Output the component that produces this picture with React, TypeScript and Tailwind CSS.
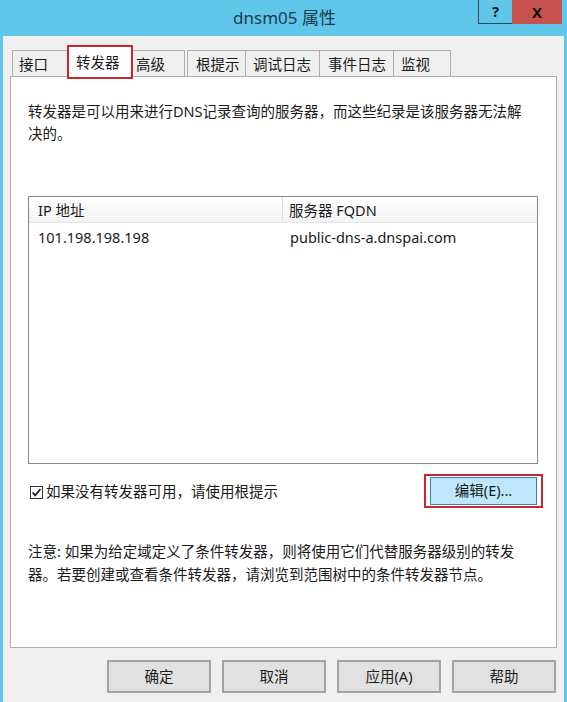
import React from "react";

const font = { fontFamily: '"Noto Sans", "Noto Sans CJK SC", sans-serif' };

function Tab({ label, w, pl = "pl-[6px]" }: { label: string; w: string; pl?: string }) {
  return (
    <div
      className={`${w} ${pl} h-[26px] -ml-px border border-b-0 border-[#adadad] bg-[#f0f0f0] text-[14.5px] leading-[26px] text-[#1a1a1a] whitespace-nowrap`}
    >
      {label}
    </div>
  );
}

function Btn({ label }: { label: string }) {
  return (
    <div className="w-[104px] h-[33px] border-2 border-[#a3a3a3] bg-[#e1e1e1] flex items-center justify-center text-[14.5px] text-[#1a1a1a]">
      {label}
    </div>
  );
}

export default function App() {
  return (
    <div style={font} className="w-[567px] h-[702px] bg-[#f0f0f0] flex flex-col overflow-hidden">
      {/* title bar */}
      <div className="relative h-[36px] bg-[#60c6ea] flex items-center justify-center shrink-0">
        <span className="text-[17px] text-[#1c3a4e] pl-[2px]">dnsm05 属性</span>
        <div className="absolute top-0 right-[5px] flex">
          <div className="w-[34px] h-[24px] border-l border-b border-[#2b4a5c] flex items-center justify-center text-[14px] font-bold text-[#111]">
            ?
          </div>
          <div className="w-[50px] h-[24px] bg-[#c7514c] flex items-center justify-center text-[15px] font-bold text-[#111]">
            X
          </div>
        </div>
      </div>

      {/* body */}
      <div className="flex-1 flex flex-col border-x-[3px] border-[#60c6ea] pl-[7px]">
        {/* tabs */}
        <div className="flex items-end h-[40px] pl-[3px] relative z-10">
          <Tab label="接口" w="w-[56px]" />
          <div className="w-[66px] h-[34px] -ml-px -mb-[3px] border-2 border-[#c8272d] bg-white pl-[7px] pt-[5px] text-[14.5px] leading-[20px] text-[#1a1a1a] whitespace-nowrap relative z-10">
            转发器
          </div>
          <Tab label="高级" w="w-[53px]" pl="pl-[3px]" />
          <div className="w-[3px]" />
          <Tab label="根提示" w="w-[59px]" pl="pl-[8px]" />
          <Tab label="调试日志" w="w-[75px]" pl="pl-[7px]" />
          <Tab label="事件日志" w="w-[75px]" pl="pl-[8px]" />
          <Tab label="监视" w="w-[58px]" pl="pl-[7px]" />
        </div>

        {/* tab page */}
        <div className="w-[547px] h-[572px] border border-[#adadad] bg-white pl-[17px] pt-[23px] text-[14.5px] text-[#1a1a1a] flex flex-col">
          <div className="leading-[22px] whitespace-nowrap">
            <div>转发器是可以用来进行DNS记录查询的服务器，而这些纪录是该服务器无法解</div>
            <div>决的。</div>
          </div>

          {/* list */}
          <div className="mt-[52px] w-[510px] h-[268px] border border-[#828790] bg-white flex flex-col">
            <div className="h-[26px] flex bg-gradient-to-b from-white to-[#f3f3f3] border-b border-[#e5e5e5]">
              <div className="w-[254px] border-r border-[#e0e0e0] pl-[9px] leading-[26px]">IP 地址</div>
              <div className="pl-[6px] leading-[26px]">服务器 FQDN</div>
            </div>
            <div className="h-[26px] flex items-center mt-[2px]">
              <div className="w-[254px] pl-[9px]">101.198.198.198</div>
              <div className="pl-[7px]">public-dns-a.dnspai.com</div>
            </div>
          </div>

          {/* checkbox row */}
          <div className="mt-[10px] w-[515px] flex items-center justify-between">
            <div className="flex items-center pl-[2px] mt-[2px]">
              <div className="w-[13px] h-[13px] border border-[#333] bg-white flex items-center justify-center">
                <svg width="11" height="11" viewBox="0 0 11 11">
                  <path d="M1.5 5.5 L4.2 8.3 L9.5 2" fill="none" stroke="#222" strokeWidth="1.8" />
                </svg>
              </div>
              <span className="ml-[3px]">如果没有转发器可用，请使用根提示</span>
            </div>
            <div className="border-2 border-[#c8272d] px-[4px] py-[1px]">
              <div className="w-[107px] h-[28px] bg-[#bee6fd] border border-[#3c7fb1] flex items-center justify-center">
                编辑(E)...
              </div>
            </div>
          </div>

          {/* note */}
          <div className="mt-[32px] leading-[23px] whitespace-nowrap">
            <div>注意: 如果为给定域定义了条件转发器，则将使用它们代替服务器级别的转发</div>
            <div>器。若要创建或查看条件转发器，请浏览到范围树中的条件转发器节点。</div>
          </div>
        </div>

        {/* bottom buttons */}
        <div className="w-[547px] flex justify-end gap-[11px] pt-[12px] pr-[1px]">
          <Btn label="确定" />
          <Btn label="取消" />
          <Btn label="应用(A)" />
          <Btn label="帮助" />
        </div>
      </div>
    </div>
  );
}
